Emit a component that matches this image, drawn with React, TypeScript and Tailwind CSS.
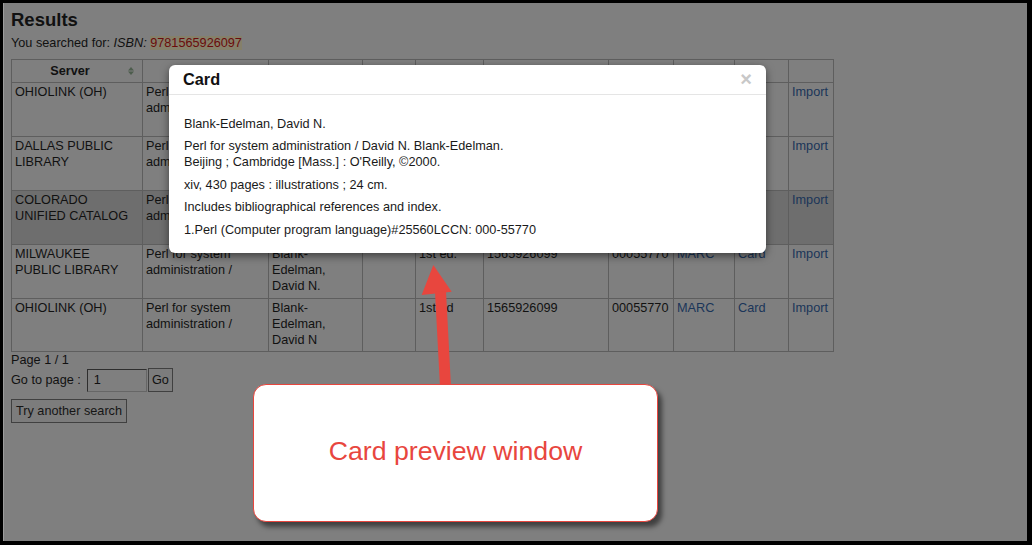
import type { ReactNode } from 'react'

type Row = {
  server: string
  author: string
  edition: string
  selected?: boolean
}

const rows: Row[] = [
  { server: 'OHIOLINK (OH)', author: 'Blank-Edelman, David N.', edition: '1st ed.' },
  { server: 'DALLAS PUBLIC LIBRARY', author: 'Blank-Edelman, David N.', edition: '1st ed.' },
  { server: 'COLORADO UNIFIED CATALOG', author: 'Blank-Edelman, David N.', edition: '1st ed.', selected: true },
  { server: 'MILWAUKEE PUBLIC LIBRARY', author: 'Blank-Edelman, David N.', edition: '1st ed.' },
  { server: 'OHIOLINK (OH)', author: 'Blank-Edelman, David N', edition: '1st ed' },
]

function SortIcon() {
  return (
    <svg className="absolute right-[8px] top-1/2 -translate-y-1/2" width="6" height="8" viewBox="0 0 6 8">
      <path d="M0 3.4 3 0l3 3.4z M0 4.6 3 8l3-3.4z" fill="#4d5d4d" />
    </svg>
  )
}

function HeadCell({ children, sortable }: { children?: ReactNode; sortable?: boolean }) {
  return (
    <th className="h-[23px] border border-[#5e5e5e] p-0 align-middle font-bold">
      <div className="relative flex items-center justify-center pr-[14px]">
        {children}
        {sortable && <SortIcon />}
      </div>
    </th>
  )
}

function Cell({ children, link }: { children?: ReactNode; link?: boolean }) {
  return (
    <td className="border border-[#5e5e5e] pt-[1px] pr-[4px] pl-[3px] align-top">
      {link ? <a className="text-[#1a3559]">{children}</a> : children}
    </td>
  )
}

function CardModal() {
  return (
    <div className="absolute top-[62px] left-[165px] w-[597px] rounded-[6px] bg-white text-[#1a1a1a] shadow-[0_3px_9px_rgba(0,0,0,0.5)]">
      <div className="flex items-center justify-between border-b border-[#e5e5e5] px-[14px] pt-[4px] pb-[5px]">
        <h3 className="text-[16.3px] leading-[20px] font-bold text-[#111]">Card</h3>
        <span className="text-[20px] leading-none font-bold text-[#c8c8c8]">×</span>
      </div>
      <div className="flex flex-col gap-[6.4px] px-[15px] pt-[21px] pb-[15px]">
        <p>Blank-Edelman, David N.</p>
        <p>
          Perl for system administration / David N. Blank-Edelman.
          <br />
          Beijing ; Cambridge [Mass.] : O'Reilly, ©2000.
        </p>
        <p>xiv, 430 pages : illustrations ; 24 cm.</p>
        <p>Includes bibliographical references and index.</p>
        <p>1.Perl (Computer program language)#25560LCCN: 000-55770</p>
      </div>
    </div>
  )
}

function Callout() {
  return (
    <>
      <svg className="absolute top-[260px] left-[413px]" width="40" height="126" viewBox="0 0 40 126">
        <path d="M16.3 2 4.7 32 34.7 28.7z" fill="#e8463e" />
        <path d="M18 29 29 28 34 124 23 124z" fill="#e8463e" />
      </svg>
      <div className="absolute top-[381px] left-[249px] flex h-[138px] w-[405px] items-center justify-center rounded-[13px] border-[1.5px] border-[#e8463e] bg-white pb-[3px] shadow-[4px_5px_5px_rgba(0,0,0,0.5)]">
        <span className="text-[26.7px] leading-none text-[#e8463e]">Card preview window</span>
      </div>
    </>
  )
}

export default function App() {
  return (
    <div className="h-[545px] w-[1032px] bg-black pt-[3px] pr-[5px] pb-[4px] pl-[3px] font-['Liberation_Sans',Arial,sans-serif]">
      <div className="relative h-full border-l border-[#9c9c9c] bg-[#7f7f7f] pt-[6px] pl-[7px] text-[12.7px] leading-4 text-[#111]">
        <h1 className="text-[18.5px] leading-[22px] font-bold">Results</h1>
        <p className="mt-[4px]">
          You searched for: <i>ISBN:</i> <span className="bg-[#85806a] text-[#6a0b0b]">9781565926097</span>
        </p>

        <table className="mt-[8px] w-[822px] table-fixed border-collapse">
          <colgroup>
            <col className="w-[131px]" />
            <col className="w-[126px]" />
            <col className="w-[94px]" />
            <col className="w-[53px]" />
            <col className="w-[68px]" />
            <col className="w-[125px]" />
            <col className="w-[65px]" />
            <col className="w-[61px]" />
            <col className="w-[54px]" />
            <col className="w-[45px]" />
          </colgroup>
          <thead>
            <tr>
              <HeadCell sortable>Server</HeadCell>
              <HeadCell sortable>Title</HeadCell>
              <HeadCell sortable>Author</HeadCell>
              <HeadCell sortable>Date</HeadCell>
              <HeadCell sortable>Edition</HeadCell>
              <HeadCell sortable>ISBN</HeadCell>
              <HeadCell sortable>LCCN</HeadCell>
              <HeadCell />
              <HeadCell />
              <HeadCell />
            </tr>
          </thead>
          <tbody>
            {rows.map((row, i) => (
              <tr key={i} className={`${i < 3 ? 'h-[54px]' : 'h-[53.5px]'} ${row.selected ? 'bg-[#6e6e6e]' : ''}`}>
                <Cell>{row.server}</Cell>
                <Cell>Perl for system administration /</Cell>
                <Cell>{row.author}</Cell>
                <Cell />
                <Cell>{row.edition}</Cell>
                <Cell>1565926099</Cell>
                <Cell>00055770</Cell>
                <Cell link>MARC</Cell>
                <Cell link>Card</Cell>
                <Cell link>Import</Cell>
              </tr>
            ))}
          </tbody>
        </table>

        <p className="mt-[1px] leading-[15px]">Page 1 / 1</p>
        <div className="flex h-[24px] items-center">
          <span>Go to page :</span>
          <input
            defaultValue="1"
            className="ml-[6px] h-[23px] w-[60px] border border-t-[#2e2e2e] border-r-[#666] border-b-[#666] border-l-[#2e2e2e] bg-[#7f7f7f] pl-[6px] text-[12.7px] text-[#111] outline-none"
          />
          <button className="ml-[1px] h-[24px] w-[25px] border border-[#404040] bg-[#7c7c7c] text-[12.7px] text-[#111]">
            Go
          </button>
        </div>
        <button className="mt-[7px] h-[24px] border border-[#404040] bg-[#7c7c7c] px-[4px] text-[12.7px] text-[#151515]">
          Try another search
        </button>

        <CardModal />
        <Callout />
      </div>
    </div>
  )
}
